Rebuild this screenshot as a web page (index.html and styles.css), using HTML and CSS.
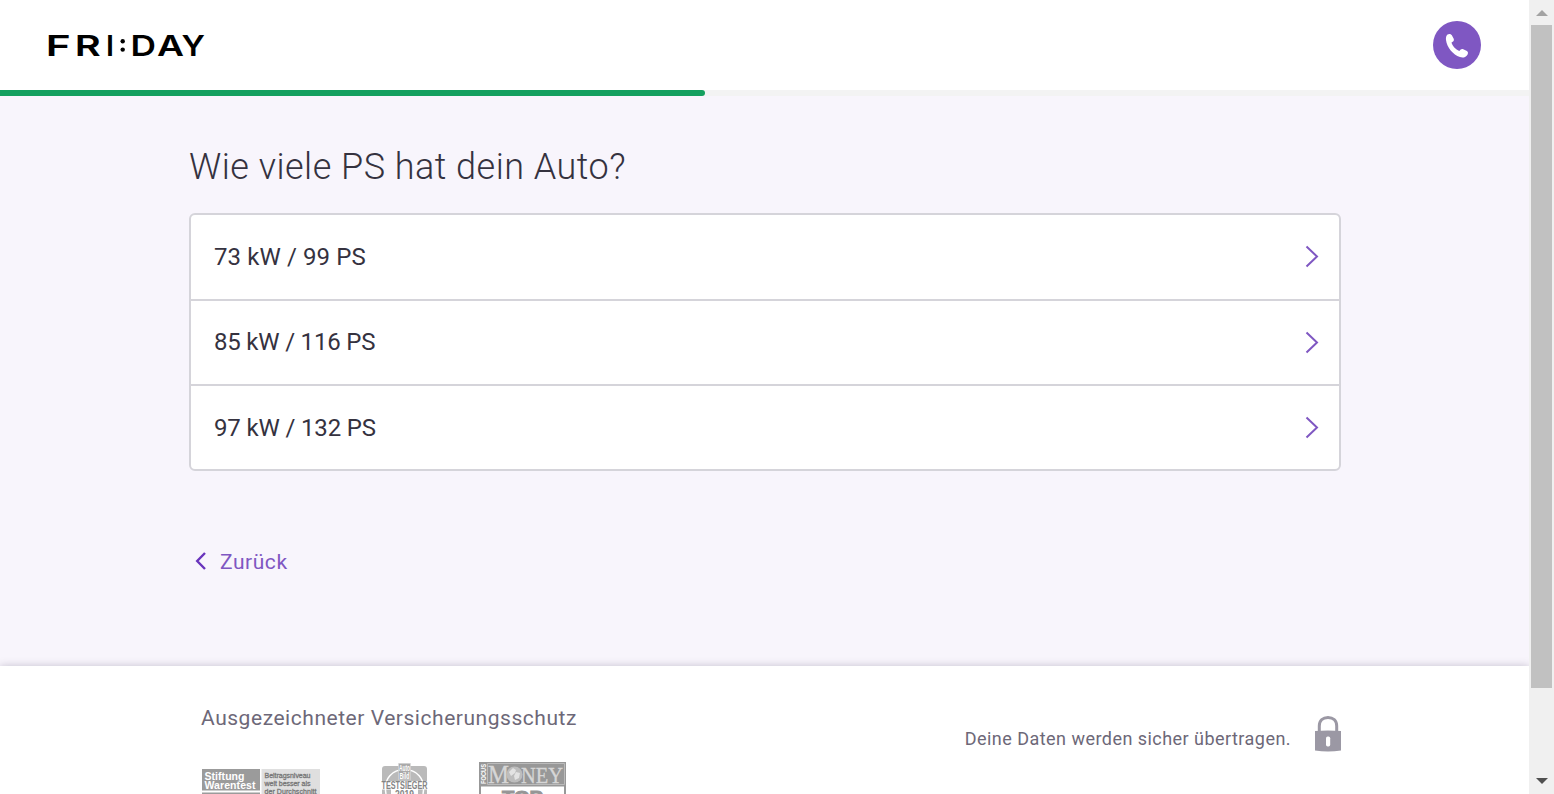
FILE: index.html
```html
<!DOCTYPE html>
<html lang="de">
<head>
<meta charset="utf-8">
<title>FRI:DAY</title>
<link rel="stylesheet" href="styles.css">
</head>
<body>
<div class="window">
  <div class="page">
    <header class="header">
      <svg class="logo" width="160" height="24" viewBox="0 0 160 24" role="img" aria-label="FRI:DAY">
        <g class="logo-text">
          <text x="-2.300" y="22" textLength="25" lengthAdjust="spacingAndGlyphs">F</text>
          <text x="26.800" y="22" textLength="26" lengthAdjust="spacingAndGlyphs">R</text>
          <text x="58" y="22">I</text>
          <text x="82.600" y="22" textLength="25.500" lengthAdjust="spacingAndGlyphs">D</text>
          <text x="109" y="22" textLength="27" lengthAdjust="spacingAndGlyphs">A</text>
          <text x="133.500" y="22" textLength="23.500" lengthAdjust="spacingAndGlyphs">Y</text>
        </g>
        <circle cx="74.700" cy="7.200" r="2.200"/><circle cx="74.700" cy="15.600" r="2.200"/>
      </svg>
      <a class="phone" href="#" aria-label="Telefon">
        <svg width="48" height="48" viewBox="0 0 48 48"><path d="M14.500 13.500c1.300-.9 3.300-.7 4.200.6l2 3.600c.5 1.200.1 2.400-1 3.100l-1.200.8c.8 3.400 4.200 7.100 7.800 8.500l1.400-1.500c.7-.8 1.700-.9 2.600-.4l3.600 1.900c1.200.8 1.400 2 .7 3.300-1.500 2.700-4.500 3.800-7.700 2.600C20 33.500 13.900 26.500 13 18.900c-.3-2.100.2-4.200 1.500-5.400z"/></svg>
      </a>
    </header>
    <div class="progress"><div class="progress-bar"></div></div>
    <main class="main">
      <h1 class="title">Wie viele PS hat dein Auto?</h1>
      <div class="options">
        <a class="option" href="#"><span class="o1">73 kW / 99 PS</span><svg width="16" height="24" viewBox="0 0 16 24"><path d="M2.500 1.500L13 11.500l-10.500 10"/></svg></a>
        <a class="option" href="#"><span class="o2">85 kW / 116 PS</span><svg width="16" height="24" viewBox="0 0 16 24"><path d="M2.500 1.500L13 11.500l-10.500 10"/></svg></a>
        <a class="option" href="#"><span class="o3">97 kW / 132 PS</span><svg width="16" height="24" viewBox="0 0 16 24"><path d="M2.500 1.500L13 11.500l-10.500 10"/></svg></a>
      </div>
      <a class="back" href="#"><svg width="12" height="20" viewBox="0 0 12 20"><path d="M10 1L2.200 9l7.800 8"/></svg><span>Zurück</span></a>
    </main>
    <footer class="footer">
      <div class="awards">
        <h2 class="awards-title">Ausgezeichneter Versicherungsschutz</h2>
        <div class="badges">
          <svg class="badge-warentest" width="118" height="25" viewBox="0 0 118 25">
            <path fill="#9b9b9b" d="M0 0h58v21.500H0zM0 23.500h58V25H0z"/><path fill="#dfdfdf" d="M59.500 0H118v25H59.500z"/>
            <g fill="#fff" font-size="10.500" font-weight="700"><text x="2.500" y="10.500" textLength="40">Stiftung</text><text x="2.500" y="19.800" textLength="51">Warentest</text></g>
            <g fill="#777" font-size="7" font-weight="400" stroke="#777" stroke-width=".3"><text x="62.500" y="9" textLength="46">Beitragsniveau</text><text x="62.500" y="17" textLength="46">weit besser als</text><text x="62.500" y="25" textLength="52">der Durchschnitt</text></g>
          </svg>
          <svg class="badge-test" width="48" height="31" viewBox="0 0 48 31">
            <path fill="#bababa" d="M1 31V6q0-3 3-3h39q3 0 3 3v25z"/>
            <path fill="none" stroke="#fff" stroke-width="1.500" d="M5 31C2 15 12 6.500 23.500 6.500S45 15 42 31"/>
            <path fill="#aaa" stroke="#ddd" stroke-width=".6" d="M17.500 .3h12v16.500h-12z"/>
            <g fill="#fff" font-size="9" font-weight="700"><text x="18" y="8" textLength="11" lengthAdjust="spacingAndGlyphs">Auto</text><text x="18.500" y="15.500" textLength="10" lengthAdjust="spacingAndGlyphs">Bild</text></g>
            <path fill="#fff" d="M0 18h48v8.500H0zM10 26h27v5H10z"/>
            <g fill="#858585" font-size="10" font-weight="700"><text x=".5" y="26" textLength="46" lengthAdjust="spacingAndGlyphs">TESTSIEGER</text><text x="14" y="34.500" textLength="19" lengthAdjust="spacingAndGlyphs">2019</text></g>
          </svg>
          <svg class="badge-money" width="87" height="32" viewBox="0 0 87 32">
            <path fill="#989898" d="M0 0h87v32H0z"/><path fill="#fff" d="M2 24.500h83V32H2z"/>
            <path fill="none" stroke="#bbb" d="M8.500 1.500h77v21h-77z"/>
            <text transform="translate(6.800 22) rotate(-90)" fill="#fff" font-size="7" font-weight="700" textLength="20" lengthAdjust="spacingAndGlyphs">FOCUS</text>
            <g class="serif" fill="#d6d6d6" stroke="#d6d6d6" stroke-width=".3"><text x="9" y="20.500" font-size="25" textLength="21" lengthAdjust="spacingAndGlyphs">M</text><text x="42" y="20.500" font-size="23" textLength="42" lengthAdjust="spacingAndGlyphs">NEY</text></g>
            <circle cx="35.500" cy="12.500" r="8" fill="#bdbdbd"/><path fill="#e3e3e3" d="M30 10l4-4 3 2-1 3-4 3zM37 10l4 1-1 5-4 2-1-4z"/>
            <text x="23" y="42" fill="#969696" stroke="#969696" font-size="18" font-weight="700" textLength="41" lengthAdjust="spacingAndGlyphs">TOP</text>
          </svg>
        </div>
      </div>
      <div class="secure">
        <span>Deine Daten werden sicher übertragen.</span>
        <svg width="26" height="37" viewBox="0 0 26 37"><path d="M4.300 17v-6C4.300 5.500 8 2.500 13 2.500s8.700 3 8.700 8.500v6" fill="none" stroke="#9b98a4" stroke-width="3"/><path fill="#9b98a4" d="M0 16q13-1.200 26 0v19.500q-13 2.200-26 0z"/><rect x="11" y="21.500" width="4.200" height="10" rx="1.700" fill="#fff"/></svg>
      </div>
    </footer>
  </div>
  <div class="scrollbar"><i class="arrow-up"></i><div class="thumb"></div><i class="arrow-down"></i></div>
</div>
</body>
</html>
```
FILE: styles.css
```css
* { box-sizing: border-box; }
body { margin: 0; overflow: hidden; font-family: Roboto, "Liberation Sans", sans-serif; color: #35323f; }
a { color: inherit; text-decoration: none; }
svg { display: block; flex: none; }
.window { display: flex; height: 794px; }
.page { width: 1529px; display: flex; flex-direction: column; background: #f8f5fc; overflow: hidden; }
.header { height: 90px; flex: none; display: flex; align-items: center; justify-content: space-between; padding: 0 48px; background: #fff; }
.logo { margin-top: 2px; overflow: visible; }
.logo-text { font-family: Inter, sans-serif; font-size: 29px; font-weight: 600; }
.phone { width: 48px; height: 48px; border-radius: 50%; background: #7f57c2; fill: #fff; }
.progress { height: 6px; flex: none; background: #f3f3f3; }
.progress-bar { width: 705px; height: 6px; background: #15a05f; border-radius: 0 3px 3px 0; }
.main { width: 1152px; height: 570px; flex: none; margin-left: 189px; padding-top: 49px; }
.title { margin: 0 0 24px; height: 44px; line-height: 44px; font-size: 36px; font-weight: 300; white-space: nowrap; letter-spacing: .48px; }
.options { border: 2px solid #d5d4da; border-radius: 6px; background: #fff; height: 258px; display: grid; grid-template-rows: 84px 85px 85px; }
.option { display: flex; align-items: center; justify-content: space-between; padding: 0 19px 0 23px; font-size: 24px; }
.option + .option { border-top: 2px solid #d5d4da; }
.option path { fill: none; stroke: #7f57c2; stroke-width: 2; }
.o1 { letter-spacing: .1px; }
.o2 { letter-spacing: -.2px; margin-bottom: 2px; }
.o3 { letter-spacing: -.15px; }
.back { display: inline-flex; align-items: center; gap: 13px; margin: 77px 0 0 6px; font-size: 21px; line-height: 28px; letter-spacing: .55px; color: #7f57c2; }
.back path { fill: none; stroke: #6934bc; stroke-width: 2.4; }
.footer { height: 160px; flex: none; display: flex; justify-content: space-between; background: #fff; padding: 38px 188px 0 201px; box-shadow: 0 0 8px rgba(50,40,70,.25); color: #6d6878; }
.awards-title { margin: 0; font-size: 21px; line-height: 28px; font-weight: 400; white-space: nowrap; letter-spacing: .54px; }
.badges { display: flex; align-items: flex-start; margin-top: 30px; font-family: "Liberation Sans", sans-serif; }
.badge-warentest { margin: 7px 0 0 1px; }
.badge-test { margin: 1px 0 0 61px; }
.badge-money { margin-left: 50px; }
.serif { font-family: "Liberation Serif", serif; font-weight: 400; }
.secure { display: flex; align-items: flex-start; gap: 24px; margin-top: 11px; font-size: 18px; white-space: nowrap; letter-spacing: .46px; }
.secure span { line-height: 24px; margin-top: 12px; }
.scrollbar { width: 25px; background: #f0f0f0; display: flex; flex-direction: column; align-items: center; padding: 10px 2px 10px; }
.arrow-up { border: 6px solid transparent; border-top: 0; border-bottom: 6px solid #a3a3a3; }
.thumb { width: 21px; height: 663px; margin: 9px 0 90px; background: #c1c1c1; flex: none; }
.arrow-down { border: 6px solid transparent; border-bottom: 0; border-top: 6px solid #505050; }
```
